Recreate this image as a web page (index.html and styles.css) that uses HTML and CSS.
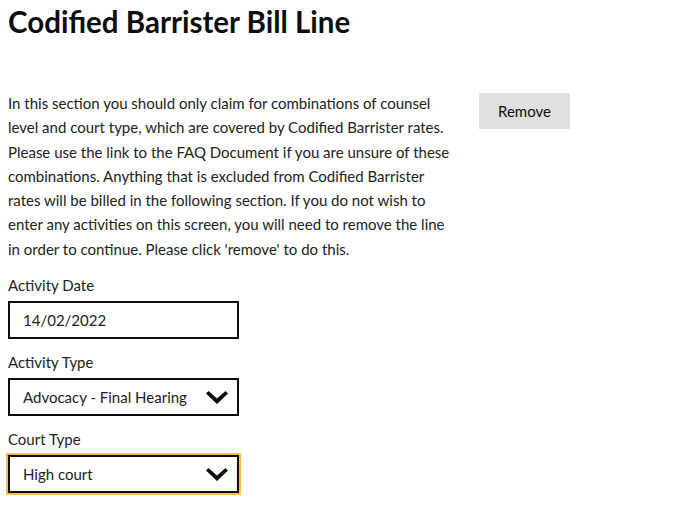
FILE: index.html
```html
<!DOCTYPE html>
<html lang="en">
<head>
    <meta charset="UTF-8">
    <meta name="viewport" content="width=device-width, initial-scale=1.0">
    <title>Codified Barrister Bill Line</title>
    <link rel="stylesheet" href="styles.css">
</head>
<body>
    <h1>Codified Barrister Bill Line</h1>
    <div class="section">
        <div class="main">
            <p class="intro">In this section you should only claim for combinations of counsel level and court type, which are covered by Codified Barrister rates. Please use the link to the FAQ Document if you are unsure of these combinations. Anything that is excluded from Codified Barrister rates will be billed in the following section. If you do not wish to enter any activities on this screen, you will need to remove the line in order to continue. Please click 'remove' to do this.</p>

            <div class="field">
                <label for="activityDate">Activity Date</label>
                <div class="box">14/02/2022</div>
            </div>

            <div class="field">
                <label for="activityType">Activity Type</label>
                <div class="box select">
                    <span>Advocacy - Final Hearing</span>
                    <svg class="chevron" width="22" height="13" viewBox="0 0 22 13"><path d="M0 2.5 L2.5 0 L11 7.5 L19.5 0 L22 2.5 L11 13 Z" fill="#0b0c0c"/></svg>
                </div>
            </div>

            <div class="field">
                <label for="courtType">Court Type</label>
                <div class="box select focused">
                    <span>High court</span>
                    <svg class="chevron" width="22" height="13" viewBox="0 0 22 13"><path d="M0 2.5 L2.5 0 L11 7.5 L19.5 0 L22 2.5 L11 13 Z" fill="#0b0c0c"/></svg>
                </div>
            </div>
        </div>
        <div class="side">
            <button type="button" id="remove">Remove</button>
        </div>
    </div>
</body>
</html>
```

FILE: styles.css
```css
body {
    font-family: Lato, "Liberation Sans", Arial, sans-serif;
    margin: 0;
    padding: 8px 8px;
    color: #0b0c0c;
    background: white;
}
h1 {
    margin: 0 0 55px;
    font-size: 29.5px;
    line-height: 28px;
    font-weight: bold;
}
.section {
    display: flex;
    gap: 21px;
}
.main {
    width: 450px;
}
.intro {
    margin: 0 0 14px;
    font-size: 15px;
    line-height: 24.3px;
    color: #222;
}
.field {
    margin-bottom: 13px;
}
.field label {
    display: block;
    font-size: 15px;
    line-height: 20px;
    margin-bottom: 6px;
    color: #222;
}
.box {
    box-sizing: border-box;
    width: 231px;
    height: 38px;
    border: 2px solid #0b0c0c;
    padding: 0 12px 0 13px;
    display: flex;
    align-items: center;
    font-size: 15px;
    color: #222;
}
.select {
    justify-content: space-between;
    padding-right: 9px;
}
.focused {
    outline: 2px solid #ffbf47;
}
button {
    margin-top: 2px;
    width: 91px;
    height: 36px;
    background: #dee0e2;
    border: none;
    font-family: inherit;
    font-size: 15px;
    color: #0b0c0c;
    cursor: pointer;
}
```
